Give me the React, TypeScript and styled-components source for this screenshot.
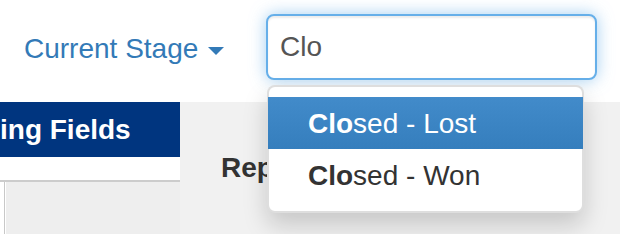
import React from "react";
import styled, { createGlobalStyle } from "styled-components";

const GlobalStyle = createGlobalStyle`
  html, body {
    margin: 0;
    padding: 0;
    background: #fff;
    overflow: hidden;
  }
  body {
    font-family: "Liberation Sans", Arial, Helvetica, sans-serif;
  }
`;

const Page = styled.div`
  width: 620px;
  height: 234px;
  display: flex;
  flex-direction: column;
  overflow: hidden;
`;

const Header = styled.div`
  height: 102px;
  flex: none;
  display: grid;
  grid-template-columns: 266px 331px;
  align-items: start;
  background: #fff;
  position: relative;
  z-index: 2;
`;

const StageToggle = styled.a`
  display: block;
  padding: 33px 0 0 24px;
  font-size: 28px;
  color: #337ab7;
  text-decoration: none;
  white-space: nowrap;
  cursor: pointer;
`;

const Caret = styled.span`
  display: inline-block;
  width: 0;
  height: 0;
  margin-left: 10px;
  vertical-align: middle;
  border-top: 8px solid #337ab7;
  border-left: 8px solid transparent;
  border-right: 8px solid transparent;
`;

const SearchWrap = styled.div`
  position: relative;
  margin-top: 14px;
`;

const SearchInput = styled.input`
  box-sizing: border-box;
  display: block;
  width: 331px;
  height: 66px;
  padding: 0 12px;
  border: 2px solid #66afe9;
  border-radius: 8px;
  outline: none;
  font-family: "Liberation Sans", Arial, Helvetica, sans-serif;
  font-size: 28px;
  line-height: 40px;
  color: #555;
  background: #fff;
  box-shadow: inset 0 2px 2px rgba(0, 0, 0, 0.075), 0 0 16px rgba(102, 175, 233, 0.6);
`;

const Menu = styled.ul`
  position: absolute;
  top: calc(100% + 5px);
  left: 1px;
  box-sizing: border-box;
  width: 317px;
  margin: 0;
  padding: 10px 0;
  list-style: none;
  background: #fff;
  border: 2px solid rgba(0, 0, 0, 0.13);
  border-radius: 8px;
  box-shadow: 0 12px 24px rgba(0, 0, 0, 0.175);
`;

const MenuItem = styled.li<{ $active?: boolean }>`
  padding: 7px 40px 5px;
  margin: 0 -1px;
  font-size: 28px;
  line-height: 40px;
  white-space: nowrap;
  color: ${(p) => (p.$active ? "#fff" : "#333")};
  background: ${(p) =>
    p.$active ? "linear-gradient(to bottom, #428bca 0%, #357ebd 100%)" : "transparent"};
`;

const Match = styled.strong`
  font-weight: 700;
`;

const Body = styled.div`
  flex: 1;
  display: flex;
`;

const SidePanel = styled.div`
  width: 180px;
  flex: none;
  display: flex;
  flex-direction: column;
  background: #fff;
  overflow: hidden;
`;

const SectionBar = styled.div`
  height: 55px;
  flex: none;
  background: #00357f;
  color: #fff;
  font-size: 28px;
  font-weight: 700;
  line-height: 55px;
  white-space: nowrap;
`;

const Spacer = styled.div`
  height: 23px;
  flex: none;
  border-bottom: 2px solid #cccccc;
`;

const FieldBox = styled.div`
  flex: 1;
  margin-left: 4px;
  border-left: 1px solid #c8c8c8;
  box-shadow: inset 1px 0 0 #fff;
  background: #eeeeee;
`;

const Content = styled.div`
  flex: 1;
  background: #f1f1f1;
  padding: 50px 0 0 41px;
`;

const ContentTitle = styled.h2`
  margin: 0;
  font-size: 28px;
  font-weight: 700;
  color: #333;
  line-height: 32px;
  white-space: nowrap;
`;

const options = [
  { match: "Clo", rest: "sed - Lost", active: true },
  { match: "Clo", rest: "sed - Won", active: false },
];

export default function App() {
  return (
    <>
      <GlobalStyle />
      <Page>
        <Header>
          <StageToggle>
            Current Stage
            <Caret />
          </StageToggle>
          <SearchWrap>
            <SearchInput defaultValue="Clo" readOnly />
            <Menu>
              {options.map((o) => (
                <MenuItem key={o.rest} $active={o.active}>
                  <Match>{o.match}</Match>
                  {o.rest}
                </MenuItem>
              ))}
            </Menu>
          </SearchWrap>
        </Header>
        <Body>
          <SidePanel>
            <SectionBar>ing Fields</SectionBar>
            <Spacer />
            <FieldBox />
          </SidePanel>
          <Content>
            <ContentTitle>Report</ContentTitle>
          </Content>
        </Body>
      </Page>
    </>
  );
}
